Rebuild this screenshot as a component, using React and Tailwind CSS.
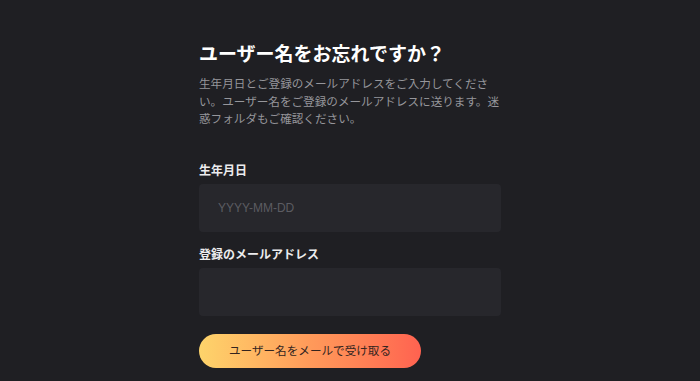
import React, { useState } from 'react';

const ForgotUsername = () => {
  const [birthday, setBirthday] = useState('');
  const [email, setEmail] = useState('');

  return (
    <div
      className="min-h-screen bg-[#1f1f23] pt-[39px]"
      style={{ fontFamily: '"Noto Sans CJK JP", "Noto Sans", sans-serif' }}
    >
      <div className="mx-auto w-[302px]">
        <h1 className="text-[19px] leading-[28px] font-bold text-white">
          ユーザー名をお忘れですか？
        </h1>
        <p className="mt-[8px] w-[303px] text-[11.6px] leading-[17.5px] text-[#96969b]">
          生年月日とご登録のメールアドレスをご入力してください。ユーザー名をご登録のメールアドレスに送ります。迷惑フォルダもご確認ください。
        </p>

        <form className="mt-[33px]" onSubmit={(e) => e.preventDefault()}>
          <label className="block text-[12px] leading-[18px] font-bold text-[#ececee]">
            生年月日
          </label>
          <input
            type="text"
            value={birthday}
            onChange={(e) => setBirthday(e.target.value)}
            placeholder="YYYY-MM-DD"
            className="mt-[5px] block h-[48px] w-full rounded-[4px] bg-[#27272c] px-[19px] text-[12px] text-white outline-none placeholder:text-[#5c5c62]"
            style={{ fontFamily: '"Liberation Sans", sans-serif' }}
          />

          <label className="mt-[13px] block text-[12px] leading-[18px] font-bold text-[#ececee]">
            登録のメールアドレス
          </label>
          <input
            type="email"
            value={email}
            onChange={(e) => setEmail(e.target.value)}
            className="mt-[5px] block h-[48px] w-full rounded-[4px] bg-[#27272c] px-[19px] text-[12px] text-white outline-none"
          />

          <button
            type="submit"
            className="mt-[18px] flex h-[34px] w-[222px] items-center justify-center rounded-full bg-gradient-to-r from-[#fdd46b] via-[#ff9a5a] to-[#ff6250] text-[11.6px] text-[#33241e]"
          >
            ユーザー名をメールで受け取る
          </button>
        </form>
      </div>
    </div>
  );
};

export default ForgotUsername;
